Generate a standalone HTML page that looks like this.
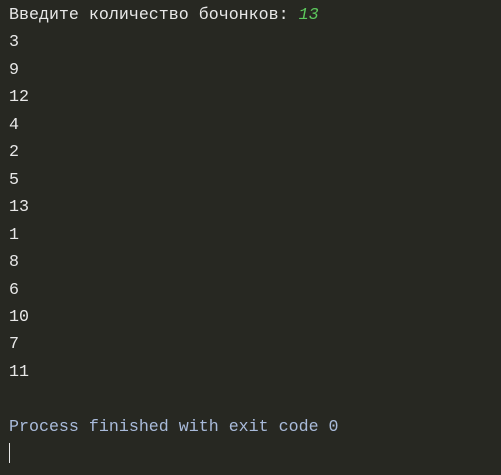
<!DOCTYPE html>
<html><head><style>
html,body{margin:0;padding:0;background:#272822;width:501px;height:475px;overflow:hidden}
pre{margin:0;padding:1px 0 0 9px;font-family:"Liberation Mono",monospace;font-size:16.65px;line-height:27.45px;color:#e8e8e8;white-space:pre}
.g{color:#5cc85c;font-style:italic}
.p{color:#a9bbdb}
.c{position:absolute;left:9px;top:443px;width:1px;height:20px;background:#e8e8e8}
</style></head><body>
<pre>Введите количество бочонков: <span class="g">13</span>
3
9
12
4
2
5
13
1
8
6
10
7
11

<span class="p">Process finished with exit code 0</span></pre>
<div class="c"></div>
</body></html>
